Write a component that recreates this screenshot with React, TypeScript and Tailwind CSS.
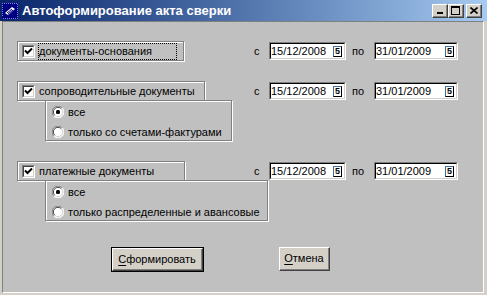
import React from 'react'

const font = { fontFamily: '"Liberation Sans", Arial, sans-serif' }

function CheckBox() {
  return (
    <span className="inline-block h-[13px] w-[13px] shrink-0 border border-t-[#808080] border-l-[#808080] border-b-white border-r-white">
      <span className="flex h-full w-full items-center justify-center border border-t-[#404040] border-l-[#404040] border-b-[#d4d0c8] border-r-[#d4d0c8] bg-white">
        <svg width="9" height="9" viewBox="0 0 9 9">
          <path d="M1 3.5 L3.5 6 L8 1.5" stroke="#000" strokeWidth="2" fill="none" />
        </svg>
      </span>
    </span>
  )
}

function Radio({ on }: { on?: boolean }) {
  return (
    <svg width="12" height="12" viewBox="0 0 12 12" className="shrink-0">
      <circle cx="6" cy="6" r="5.5" fill="#fff" />
      <path d="M10.2 1.8 A5.5 5.5 0 0 0 1.8 10.2" stroke="#808080" fill="none" />
      <path d="M9.3 2.7 A4.5 4.5 0 0 0 2.7 9.3" stroke="#404040" fill="none" />
      <path d="M1.8 10.2 A5.5 5.5 0 0 0 10.2 1.8" stroke="#fff" fill="none" />
      <path d="M2.7 9.3 A4.5 4.5 0 0 0 9.3 2.7" stroke="#d4d0c8" fill="none" />
      {on && <rect x="4" y="4" width="4" height="4" rx="1.5" fill="#000" />}
    </svg>
  )
}

function DateField({ value, width }: { value: string; width: string }) {
  return (
    <div className={`${width} h-[18px] border border-t-[#808080] border-l-[#808080] border-b-white border-r-white`}>
      <div className="flex h-full items-center justify-between border border-t-[#000] border-l-[#000] border-b-[#d4d0c8] border-r-[#d4d0c8] bg-white pr-[2px]">
        <span className="text-[11px] leading-none text-black">{value}</span>
        <span className="flex h-[11px] w-[9px] items-center justify-center border border-t-[#3a6ea5] border-l-[#3a6ea5] border-b-black border-r-black bg-white text-[9px] font-bold leading-none text-black">
          5
        </span>
      </div>
    </div>
  )
}

function Dates() {
  return (
    <div className="mt-[1px] flex items-center text-[11px] text-black">
      <span className="w-[15px]">с</span>
      <DateField value="15/12/2008" width="w-[77px]" />
      <span className="w-[28px] pl-[6px]">по</span>
      <DateField value="31/01/2009" width="w-[84px]" />
    </div>
  )
}

function Etched({ className, children }: { className: string; children?: React.ReactNode }) {
  return (
    <div className={`${className} border border-[#808080] shadow-[1px_1px_0_#fff,inset_1px_1px_0_#fff]`}>
      {children}
    </div>
  )
}

function CheckRow({ label, width, focus }: { label: string; width: string; focus?: boolean }) {
  return (
    <Etched className={`${width} flex h-[20px] items-center pl-[4px]`}>
      <CheckBox />
      <span
        className={`ml-[3px] flex h-[17px] items-center text-[11px] text-black ${
          focus ? 'w-[139px] border border-dotted border-black' : 'px-[1px]'
        }`}
      >
        {label}
      </span>
    </Etched>
  )
}

function RadioBox({ width, second }: { width: string; second: string }) {
  return (
    <Etched className={`${width} ml-[28px] -mt-[1px] h-[41px] pt-[1px] pl-[6px]`}>
      <div className="flex h-[20px] items-center gap-[4px] text-[11px] text-black">
        <Radio on />
        <span>все</span>
      </div>
      <div className="flex h-[20px] items-center gap-[4px] text-[11px] text-black">
        <Radio />
        <span>{second}</span>
      </div>
    </Etched>
  )
}

function WinBtn({ children, className = '' }: { children: React.ReactNode; className?: string }) {
  return (
    <div className={`h-[14px] w-[16px] border border-t-white border-l-white border-b-[#404040] border-r-[#404040] bg-[#d4d0c8] ${className}`}>
      <div className="flex h-full w-full items-center justify-center border-b border-r border-b-[#808080] border-r-[#808080]">
        {children}
      </div>
    </div>
  )
}

function Button({ label, width, height, isDefault }: { label: string; width: string; height: string; isDefault?: boolean }) {
  const inner = (
    <div className="flex h-full w-full items-center justify-center border border-t-white border-l-white border-b-[#404040] border-r-[#404040] bg-[#d4d0c8]">
      <div className="flex h-full w-full items-center justify-center border-b border-r border-b-[#808080] border-r-[#808080] text-[11px] text-black">
        <span className="underline underline-offset-[2px]">{label[0]}</span>
        <span>{label.slice(1)}</span>
      </div>
    </div>
  )
  return isDefault ? (
    <div className={`${width} ${height} border border-black`}>{inner}</div>
  ) : (
    <div className={`${width} ${height}`}>{inner}</div>
  )
}

export default function App() {
  return (
    <div className="h-[295px] w-[487px] overflow-hidden bg-[#d4d0c8]" style={font}>
      <div className="flex h-[21px] items-center bg-gradient-to-r from-[#0a246a] to-[#a6caf0] pl-[2px] pr-[5px]">
        <svg width="16" height="16" viewBox="0 0 16 16">
          <rect width="16" height="16" fill="#000080" />
          <path d="M0 0h1v1H0zM2 0h1v1H2zM4 0h1v1H4zM6 0h1v1H6zM8 0h1v1H8zM10 0h1v1h-1zM12 0h1v1h-1zM14 0h1v1h-1zM1 15h1v1H1zM3 15h1v1H3zM5 15h1v1H5zM7 15h1v1H7zM9 15h1v1H9zM11 15h1v1h-1zM13 15h1v1h-1zM15 15h1v1h-1zM0 2h1v1H0zM0 4h1v1H0zM0 6h1v1H0zM0 8h1v1H0zM0 10h1v1H0zM0 12h1v1H0zM15 1h1v1h-1zM15 3h1v1h-1zM15 5h1v1h-1zM15 7h1v1h-1zM15 9h1v1h-1zM15 11h1v1h-1zM15 13h1v1h-1z" fill="#8080ff" />
          <path d="M3 10 L10 4 L13 6 L6 12 Z" fill="#fff" />
          <path d="M5 10 L10 6 M6 11 L11 7" stroke="#000080" strokeWidth="1" />
        </svg>
        <span className="ml-[4px] text-[13px] font-bold leading-none text-white">Автоформирование акта сверки</span>
        <div className="ml-auto flex items-center">
          <WinBtn>
            <span className="mt-[5px] block h-[2px] w-[6px] bg-black" />
          </WinBtn>
          <WinBtn>
            <span className="block h-[9px] w-[9px] border border-t-2 border-black" />
          </WinBtn>
          <WinBtn className="ml-[2px]">
            <svg width="8" height="7" viewBox="0 0 8 7">
              <path d="M0.5 0.5 L7.5 6.5 M7.5 0.5 L0.5 6.5" stroke="#000" strokeWidth="1.6" />
            </svg>
          </WinBtn>
        </div>
      </div>
      <div className="ml-[2px] mr-[3px] h-[272px] border border-t-[#808080] border-l-[#808080] border-b-white border-r-white bg-[#c0c0c0] pl-[14px] pt-[19px]">
        <div className="flex items-start">
          <div className="w-[237px]">
            <CheckRow label="документы-основания" width="w-[167px]" focus />
          </div>
          <Dates />
        </div>

        <div className="mt-[20px] flex items-start">
          <div className="w-[237px]">
            <CheckRow label="сопроводительные документы" width="w-[188px]" />
            <RadioBox width="w-[187px]" second="только со счетами-фактурами" />
          </div>
          <Dates />
        </div>

        <div className="mt-[20px] flex items-start">
          <div className="w-[237px]">
            <CheckRow label="платежные документы" width="w-[168px]" />
            <RadioBox width="w-[223px]" second="только распределенные и авансовые" />
          </div>
          <Dates />
        </div>

        <div className="mt-[26px] flex items-start pl-[94px]">
          <Button label="Сформировать" width="w-[93px]" height="h-[25px]" isDefault />
          <div className="ml-[75px]">
            <Button label="Отмена" width="w-[51px]" height="h-[24px]" />
          </div>
        </div>
      </div>
    </div>
  )
}
